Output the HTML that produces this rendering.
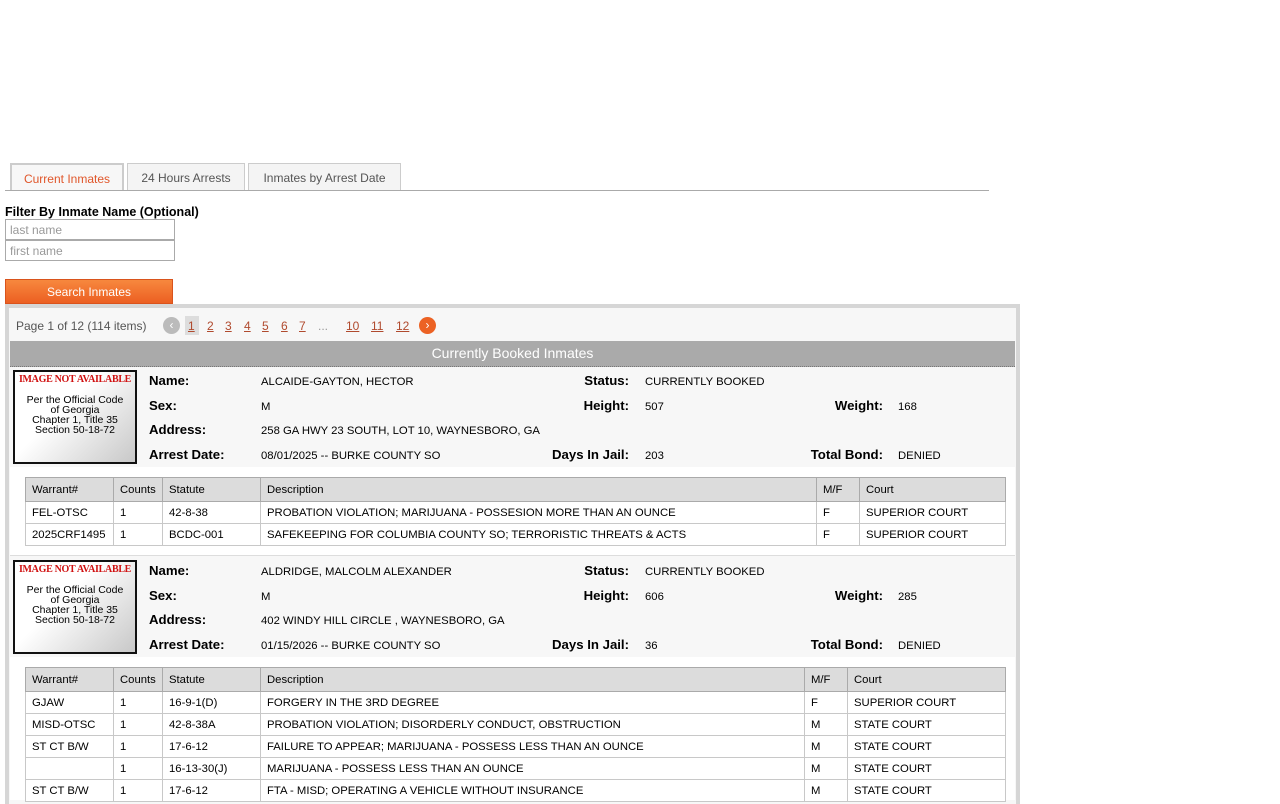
<!DOCTYPE html>
<html><head><meta charset="utf-8"><style>
*{box-sizing:border-box;margin:0;padding:0}
body{width:1280px;height:800px;overflow:hidden;background:#fff;font-family:"Liberation Sans",sans-serif;font-size:12px;color:#000;position:relative}
.a{position:absolute}
.tab{position:absolute;top:163px;height:28px;border:1px solid #ccc;border-bottom:none;background:#f4f4f4;color:#555;font-size:12px;text-align:center;line-height:29px}
.inp{position:absolute;left:5px;width:170px;height:21px;border:1px solid #aaa;color:#999;font-size:12px;padding-left:4px;line-height:21px;background:#fff}
.pg{position:absolute;top:319px;color:#b04a2e;text-decoration:underline;font-size:12px}
.lb{position:absolute;font-weight:bold;font-size:13.2px;white-space:nowrap}
.lr{text-align:right}
.v{position:absolute;font-size:11.3px;white-space:nowrap;margin-top:2px}
table{position:absolute;left:25px;border-collapse:collapse;table-layout:fixed;font-size:11.3px;background:#fff}
td{border:1px solid #c8c8c8;height:22px;padding:1px 0 0 6px;white-space:nowrap;overflow:hidden}
tr.h td{background:#dcdcdc;height:24px;border-color:#aaa}
table{border:1px solid #999}
.img{position:absolute;left:13px;width:124px;height:94px;border:2px solid #111;background:linear-gradient(135deg,#fff 40%,#c8c8c8);text-align:center}
.img b{display:block;color:#d01010;font-family:"Liberation Serif",serif;font-size:10px;font-weight:bold;margin-top:2px;white-space:nowrap;letter-spacing:-0.3px}
.img span{display:block;font-family:"Liberation Sans",sans-serif;font-size:10.5px;line-height:10px;margin-top:10px}
</style></head><body>
<div class="tab" style="left:10px;width:114px;color:#e0562a;background:#f7f7f7;border-top:2px solid #ccc;border-left:2px solid #ccc;border-right:2px solid #ccc">Current Inmates</div>
<div class="tab" style="left:127px;width:118px">24 Hours Arrests</div>
<div class="tab" style="left:248px;width:153px">Inmates by Arrest Date</div>
<div class="a" style="left:5px;top:190px;width:984px;height:1px;background:#aaa"></div>
<div class="a" style="left:5px;top:205px;font-weight:bold;font-size:12.5px">Filter By Inmate Name (Optional)</div>
<div class="inp" style="top:219px">last name</div>
<div class="inp" style="top:240px">first name</div>
<div class="a" style="left:5px;top:279px;width:168px;height:25px;background:linear-gradient(#f7883e,#ec5f22);border:1px solid #d9531c;color:#fff;text-align:center;line-height:24px;font-size:12px">Search Inmates</div>
<div class="a" style="left:5px;top:304px;width:1015px;height:500px;border:4px solid #d6d6d6;border-bottom:none;background:#f7f7f7"></div>
<div class="a" style="left:16px;top:319px;color:#555">Page 1 of 12 (114 items)</div>
<div class="a" style="left:163px;top:317px;width:17px;height:17px;border-radius:50%;background:#bbb;color:#fff;text-align:center;line-height:16px;font-size:12px">&#8249;</div>
<div class="a" style="left:185px;top:316px;width:14px;height:19px;background:#ddd"></div>
<span class="pg" style="left:188px">1</span><span class="pg" style="left:207px">2</span><span class="pg" style="left:225px">3</span><span class="pg" style="left:244px">4</span><span class="pg" style="left:262px">5</span><span class="pg" style="left:281px">6</span><span class="pg" style="left:299px">7</span>
<span class="a" style="left:318px;top:319px;color:#999">...</span>
<span class="pg" style="left:346px">10</span><span class="pg" style="left:371px">11</span><span class="pg" style="left:396px">12</span>
<div class="a" style="left:419px;top:317px;width:17px;height:17px;border-radius:50%;background:#ec6224;color:#fff;text-align:center;line-height:16px;font-size:12px">&#8250;</div>
<div class="a" style="left:10px;top:341px;width:1005px;height:26px;background:#aaa;border-bottom:1px dotted #777;color:#fff;text-align:center;font-size:14px;line-height:25px">Currently Booked Inmates</div>

<div class="a" style="left:10px;top:367px;width:1005px;height:100px;background:#f7f7f7"></div>
<div class="a" style="left:10px;top:467px;width:1005px;height:89px;background:#fff;border-bottom:1px solid #ddd"></div>
<div class="img" style="top:370px"><b>IMAGE NOT AVAILABLE</b><span>Per the Official Code<br>of Georgia<br>Chapter 1, Title 35<br>Section 50-18-72</span></div>
<div class="lb" style="left:149px;top:373px">Name:</div><div class="v" style="left:261px;top:374px">ALCAIDE-GAYTON, HECTOR</div>
<div class="lb" style="left:149px;top:398px">Sex:</div><div class="v" style="left:261px;top:399px">M</div>
<div class="lb" style="left:149px;top:422px">Address:</div><div class="v" style="left:261px;top:423px">258 GA HWY 23 SOUTH, LOT 10, WAYNESBORO, GA</div>
<div class="lb" style="left:149px;top:447px">Arrest Date:</div><div class="v" style="left:261px;top:448px">08/01/2025 -- BURKE COUNTY SO</div>
<div class="lb lr" style="left:500px;width:129px;top:373px">Status:</div><div class="v" style="left:645px;top:374px">CURRENTLY BOOKED</div>
<div class="lb lr" style="left:500px;width:129px;top:398px">Height:</div><div class="v" style="left:645px;top:399px">507</div>
<div class="lb lr" style="left:500px;width:129px;top:447px">Days In Jail:</div><div class="v" style="left:645px;top:448px">203</div>
<div class="lb lr" style="left:760px;width:123px;top:398px">Weight:</div><div class="v" style="left:898px;top:399px">168</div>
<div class="lb lr" style="left:760px;width:123px;top:447px">Total Bond:</div><div class="v" style="left:898px;top:448px">DENIED</div>
<table style="top:477px;width:980px">
<colgroup><col style="width:88px"><col style="width:49px"><col style="width:98px"><col style="width:556px"><col style="width:43px"><col style="width:146px"></colgroup>
<tr class="h"><td>Warrant#</td><td>Counts</td><td>Statute</td><td>Description</td><td>M/F</td><td>Court</td></tr>
<tr><td>FEL-OTSC</td><td>1</td><td>42-8-38</td><td>PROBATION VIOLATION; MARIJUANA - POSSESION MORE THAN AN OUNCE</td><td>F</td><td>SUPERIOR COURT</td></tr>
<tr><td>2025CRF1495</td><td>1</td><td>BCDC-001</td><td>SAFEKEEPING FOR COLUMBIA COUNTY SO; TERRORISTIC THREATS &amp; ACTS</td><td>F</td><td>SUPERIOR COURT</td></tr>
</table>

<div class="a" style="left:10px;top:557px;width:1005px;height:100px;background:#f7f7f7"></div>
<div class="a" style="left:10px;top:657px;width:1005px;height:143px;background:#fff"></div>
<div class="img" style="top:560px"><b>IMAGE NOT AVAILABLE</b><span>Per the Official Code<br>of Georgia<br>Chapter 1, Title 35<br>Section 50-18-72</span></div>
<div class="lb" style="left:149px;top:563px">Name:</div><div class="v" style="left:261px;top:564px">ALDRIDGE, MALCOLM ALEXANDER</div>
<div class="lb" style="left:149px;top:588px">Sex:</div><div class="v" style="left:261px;top:589px">M</div>
<div class="lb" style="left:149px;top:612px">Address:</div><div class="v" style="left:261px;top:613px">402 WINDY HILL CIRCLE , WAYNESBORO, GA</div>
<div class="lb" style="left:149px;top:637px">Arrest Date:</div><div class="v" style="left:261px;top:638px">01/15/2026 -- BURKE COUNTY SO</div>
<div class="lb lr" style="left:500px;width:129px;top:563px">Status:</div><div class="v" style="left:645px;top:564px">CURRENTLY BOOKED</div>
<div class="lb lr" style="left:500px;width:129px;top:588px">Height:</div><div class="v" style="left:645px;top:589px">606</div>
<div class="lb lr" style="left:500px;width:129px;top:637px">Days In Jail:</div><div class="v" style="left:645px;top:638px">36</div>
<div class="lb lr" style="left:760px;width:123px;top:588px">Weight:</div><div class="v" style="left:898px;top:589px">285</div>
<div class="lb lr" style="left:760px;width:123px;top:637px">Total Bond:</div><div class="v" style="left:898px;top:638px">DENIED</div>
<table style="top:667px;width:980px">
<colgroup><col style="width:88px"><col style="width:49px"><col style="width:98px"><col style="width:544px"><col style="width:43px"><col style="width:158px"></colgroup>
<tr class="h"><td>Warrant#</td><td>Counts</td><td>Statute</td><td>Description</td><td>M/F</td><td>Court</td></tr>
<tr><td>GJAW</td><td>1</td><td>16-9-1(D)</td><td>FORGERY IN THE 3RD DEGREE</td><td>F</td><td>SUPERIOR COURT</td></tr>
<tr><td>MISD-OTSC</td><td>1</td><td>42-8-38A</td><td>PROBATION VIOLATION; DISORDERLY CONDUCT, OBSTRUCTION</td><td>M</td><td>STATE COURT</td></tr>
<tr><td>ST CT B/W</td><td>1</td><td>17-6-12</td><td>FAILURE TO APPEAR; MARIJUANA - POSSESS LESS THAN AN OUNCE</td><td>M</td><td>STATE COURT</td></tr>
<tr><td></td><td>1</td><td>16-13-30(J)</td><td>MARIJUANA - POSSESS LESS THAN AN OUNCE</td><td>M</td><td>STATE COURT</td></tr>
<tr><td>ST CT B/W</td><td>1</td><td>17-6-12</td><td>FTA - MISD; OPERATING A VEHICLE WITHOUT INSURANCE</td><td>M</td><td>STATE COURT</td></tr>
</table>
</body></html>
